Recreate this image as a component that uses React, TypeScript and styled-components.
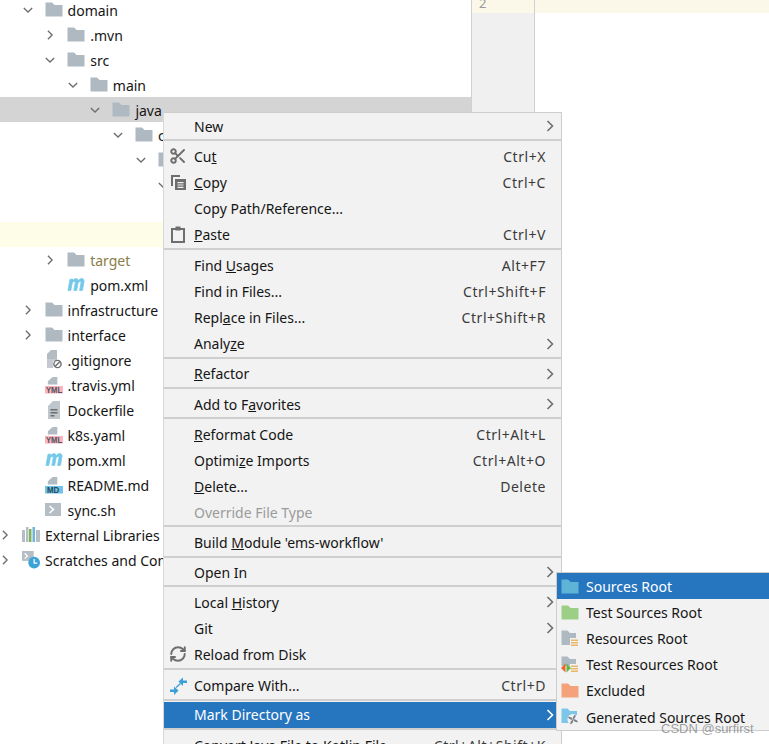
import React from "react";
import styled, { createGlobalStyle } from "styled-components";
import { Scissors, RefreshCw } from "lucide-react";

const GlobalStyle = createGlobalStyle`
  html, body {
    margin: 0;
    padding: 0;
    background: #fff;
  }
  body {
    font-family: "Noto Sans", "Open Sans", sans-serif;
  }
`;

const Page = styled.div`
  position: relative;
  width: 769px;
  height: 744px;
  overflow: hidden;
  display: flex;
  background: #fff;
  color: #151515;
  font-size: 14px;
`;

/* project tree */
const Tree = styled.div`
  width: 471px;
  flex: none;
  margin-top: -3px;
`;

const TreeRow = styled.div<{ $level: number; $tone?: "selected" | "caret" }>`
  display: flex;
  align-items: center;
  height: 25px;
  padding-left: ${(p) => p.$level * 22.6}px;
  background: ${(p) =>
    p.$tone === "selected" ? "#d4d4d4" : p.$tone === "caret" ? "#fefde8" : "transparent"};
`;

const ChevronSlot = styled.span`
  width: 10px;
  height: 14px;
  flex: none;
  display: flex;
  align-items: center;
  justify-content: center;
`;

const TreeIcon = styled.span`
  width: 18px;
  height: 18px;
  flex: none;
  margin-left: 12px;
  margin-right: 5px;
  display: flex;
  align-items: center;
  justify-content: center;
`;

const TreeLabel = styled.span<{ $muted?: boolean }>`
  white-space: nowrap;
  padding-top: 2px;
  color: ${(p) => (p.$muted ? "#8a7d48" : "#151515")};
`;

/* editor */
const Gutter = styled.div`
  width: 62px;
  flex: none;
  background: #f0f0f0;
  border-left: 1px solid #d0d0d0;
  border-right: 1px solid #d0d0d0;
`;

const GutterLine = styled.div`
  height: 13px;
  background: #fbf8ea;
  overflow: hidden;
  color: #9a9a9a;
  font-size: 13px;
  line-height: 6px;
  padding-left: 7px;
`;

const Editor = styled.div`
  flex: 1;
`;

const EditorLine = styled.div`
  height: 13px;
  background: #fbf8ea;
`;

/* context menus */
const Menu = styled.div`
  position: absolute;
  left: 163px;
  top: 112px;
  width: 397px;
  background: #f2f2f2;
  border: 1px solid #cdcdcd;
  border-left-color: #d8d8d8;
`;

const SubMenu = styled.div`
  position: absolute;
  left: 556px;
  top: 572px;
  width: 213px;
  box-sizing: border-box;
  background: #f2f2f2;
  border: 1px solid #cdcdcd;
  border-right: none;
`;

const Row = styled.div<{ $active?: boolean; $disabled?: boolean }>`
  display: flex;
  align-items: center;
  height: 26px;
  position: relative;
  padding-left: 30px;
  padding-right: 15px;
  white-space: nowrap;
  background: ${(p) => (p.$active ? "#2675bf" : "transparent")};
  color: ${(p) => (p.$active ? "#fff" : p.$disabled ? "#9b9b9b" : "#151515")};
`;

const SubRow = styled(Row)`
  height: 26.2px;
  padding-left: 29px;
`;

const RowIcon = styled.span`
  position: absolute;
  left: 5px;
  top: 4px;
  width: 18px;
  height: 18px;
  display: flex;
  align-items: center;
  justify-content: center;
`;

const SubRowIcon = styled(RowIcon)`
  left: 4px;
`;

const RowLabel = styled.span`
  flex: 1;
`;

const Shortcut = styled.span`
  color: #3a3a3a;
  letter-spacing: 0.55px;
`;

const Arrow = styled.span`
  position: absolute;
  right: 5px;
  top: 7px;
  display: flex;
`;

const Separator = styled.div<{ $shift: number }>`
  height: 2px;
  background: #cfcfcf;
  margin: ${(p) => (p.$shift > 0 ? 1 : 0)}px 0 ${(p) => (p.$shift < 0 ? 1.3 : 2.3)}px;
`;

const Watermark = styled.div`
  position: absolute;
  left: 661px;
  top: 721px;
  font-family: "Liberation Sans", sans-serif;
  font-size: 13px;
  color: rgba(110, 110, 110, 0.65);
  white-space: nowrap;
`;

const Chevron = ({ open, color = "#6e6e6e" }: { open?: boolean; color?: string }) => (
  <svg width="12" height="12" viewBox="0 0 12 12" fill="none" stroke={color} strokeWidth="1.6">
    <path d={open ? "M1 3.5l5 5 5-5" : "M3.5 1l5 5-5 5"} />
  </svg>
);

const FolderIcon = ({ color = "#afb9c1" }: { color?: string }) => (
  <svg width="18" height="15" viewBox="0 0 18 15">
    <path d="M0.5 0.5h6.5l2.6 2.5H17.5V14.5H0.5z" fill={color} />
  </svg>
);

const SmallFile = () => <path d="M8 0.500h5v8H3V5z" fill="#b4bcc3" />;

const YamlIcon = () => (
  <svg width="19" height="18" viewBox="0 0 19 18">
    <SmallFile />
    <rect x="0" y="10" width="19" height="8" fill="#f9b4c0" />
    <text x="1" y="17" fontSize="9" fontFamily="Liberation Sans" fontWeight="700" textLength="17" lengthAdjust="spacingAndGlyphs" fill="#50565b">
      YML
    </text>
  </svg>
);

const MdIcon = () => (
  <svg width="19" height="18" viewBox="0 0 19 18">
    <SmallFile />
    <rect x="0" y="10" width="19" height="8" fill="#6ec3e6" />
    <text x="2" y="17" fontSize="9" fontFamily="Liberation Sans" fontWeight="700" textLength="13" lengthAdjust="spacingAndGlyphs" fill="#2c4a5c">
      MD
    </text>
  </svg>
);

const MavenIcon = () => (
  <svg width="19" height="13" viewBox="0 2.500 19 11.500" preserveAspectRatio="none">
    <path
      d="M1 13.500L3.200 3.500h3l-.3 1.500C7 3.700 8.400 3 9.600 3c1.300 0 2 .7 2.200 2C13 3.700 14.300 3 15.600 3c1.800 0 2.700 1.100 2.300 3l-1.600 7.500h-3l1.400-6.600c.2-.9-.1-1.300-.8-1.300-.6 0-1.400.4-2.200 1.200l-1.500 6.700h-3l1.400-6.600c.2-.9-.1-1.300-.8-1.300-.6 0-1.400.4-2.200 1.200L4 13.500z"
      fill="#74c8ea"
      stroke="#74c8ea"
      strokeWidth="0.7"
    />
  </svg>
);

const IgnoreIcon = () => (
  <svg width="18" height="19" viewBox="0 0 18 19">
    <path d="M2 9V4l4-4h6v9z" fill="#b4bcc3" />
    <path d="M2 9h6v9H2z" fill="#c4cacf" />
    <path d="M8 9h4v2H8z" fill="#c4cacf" />
    <circle cx="12.500" cy="14" r="3.600" fill="#fff" stroke="#6e6e6e" strokeWidth="1.400" />
    <path d="M10 16.500l5-5" stroke="#6e6e6e" strokeWidth="1.400" />
  </svg>
);

const DockerIcon = () => (
  <svg width="16" height="18" viewBox="0 0 16 18">
    <path d="M2 18V5l5-5h7v18z" fill="#c0c7cc" />
    <path d="M4.500 8h7v1.400h-7zM4.500 11h7v1.400h-7zM4.500 14h4v1.400h-4z" fill="#6e6e6e" />
  </svg>
);

const ShellIcon = () => (
  <svg width="17" height="14" viewBox="0 0 17 14">
    <rect width="16" height="13" fill="#b6bec5" />
    <path d="M4.500 3l4 3.500-4 3.500" fill="none" stroke="#fff" strokeWidth="1.600" />
  </svg>
);

const LibrariesIcon = () => (
  <svg width="18" height="15" viewBox="0 0 18 15">
    <rect x="0" y="3" width="3" height="12" fill="#b6bec5" />
    <rect x="4" y="0" width="2.500" height="15" fill="#b6bec5" />
    <rect x="7" y="2" width="2.500" height="13" fill="#7fb35c" />
    <rect x="10.500" y="0" width="2.500" height="15" fill="#6fb6dc" />
    <rect x="14" y="3" width="4" height="12" fill="#b6bec5" />
  </svg>
);

const ScratchIcon = () => (
  <svg width="20" height="20" viewBox="0 0 20 20">
    <rect y="0" width="13" height="11" fill="#b6bec5" />
    <path d="M3 2.500l3 3-3 3" fill="none" stroke="#fff" strokeWidth="1.400" />
    <circle cx="13.500" cy="13" r="6.500" fill="#3aa3d8" />
    <path d="M13.500 9v4.500h3.500" fill="none" stroke="#fff" strokeWidth="1.400" />
  </svg>
);

const CopyIcon = () => (
  <svg width="17" height="17" viewBox="0 0 17 17">
    <path d="M1 1h9v2H3v9H1z" fill="#6e6e6e" />
    <path d="M5 5h11v11H5z" fill="#6e6e6e" />
    <path d="M7.500 8h6v1.200h-6zM7.500 10.400h6v1.200h-6zM7.500 12.800h6V14h-6z" fill="#f2f2f2" />
  </svg>
);

const PasteIcon = () => (
  <svg width="14" height="17" viewBox="0 0 14 17">
    <path d="M1 3h12v13H1z" fill="none" stroke="#6e6e6e" strokeWidth="2" />
    <path d="M4.500 0.500h5v4h-5z" fill="#6e6e6e" />
  </svg>
);

const CompareIcon = () => (
  <svg width="17" height="18" viewBox="0 0 17 18" fill="#3b9fd8">
    <path d="M8.500 4.500L13 0.500v3h4v2.500h-4v3z" />
    <path d="M8.500 13.500L4 9.500v3H0V15h4v3z" />
    <path d="M6 10.500L10.500 6.500" stroke="#3b9fd8" strokeWidth="1.400" />
  </svg>
);

const ResourceLines = () => <path d="M10 9.500h7v1.500h-7zM10 12h7v1.500h-7zM10 14.500h7V16h-7z" fill="#eab768" />;

const ResourcesIcon = () => (
  <svg width="18" height="16" viewBox="0 0 18 16">
    <path d="M0.500 0.500h6l2.500 2.500H15v5H9v7H0.500z" fill="#afb9c1" />
    <ResourceLines />
  </svg>
);

const TestResourcesIcon = () => (
  <svg width="18" height="17" viewBox="0 0 18 17">
    <path d="M0.500 0.500h6l2.500 2.500H15v5H9v2H0.500z" fill="#afb9c1" />
    <ResourceLines />
    <path d="M4.500 7.500v9L0 12z" fill="#e8662f" />
    <path d="M5.500 7.500v9L10 12z" fill="#62b543" />
  </svg>
);

const GeneratedIcon = () => (
  <svg width="18" height="17" viewBox="0 0 18 17">
    <path d="M0.500 0.500h6l2.500 2.500H16v4H8v8H0.500z" fill="#7cc6ea" />
    <circle cx="12" cy="11.500" r="5.500" fill="#f2f2f2" />
    <path
      d="M12 11.500c-.5-2 .2-4 2.500-5 .6 2-.4 4-2.500 5zm0 0c2-.5 4 .2 5 2.500-2 .6-4-.4-5-2.500zm0 0c.5 2-.2 4-2.500 5-.6-2 .4-4 2.500-5zm0 0c-2 .5-4-.2-5-2.500 2-.6 4 .4 5 2.500z"
      fill="#7a8288"
    />
  </svg>
);

type TreeItem = {
  level: number;
  label: string;
  icon?: React.ReactNode;
  open?: boolean;
  leaf?: boolean;
  tone?: "selected" | "caret";
  muted?: boolean;
};

const folder = <FolderIcon />;

const treeItems: TreeItem[] = [
  { level: 1, label: "domain", icon: folder, open: true },
  { level: 2, label: ".mvn", icon: folder },
  { level: 2, label: "src", icon: folder, open: true },
  { level: 3, label: "main", icon: folder, open: true },
  { level: 4, label: "java", icon: folder, open: true, tone: "selected" },
  { level: 5, label: "com", icon: folder, open: true },
  { level: 6, label: "", icon: folder, open: true },
  { level: 7, label: "", open: true },
  { level: 0, label: "", leaf: true },
  { level: 0, label: "", leaf: true, tone: "caret" },
  { level: 2, label: "target", icon: folder, muted: true },
  { level: 2, label: "pom.xml", icon: <MavenIcon />, leaf: true },
  { level: 1, label: "infrastructure", icon: folder },
  { level: 1, label: "interface", icon: folder },
  { level: 1, label: ".gitignore", icon: <IgnoreIcon />, leaf: true },
  { level: 1, label: ".travis.yml", icon: <YamlIcon />, leaf: true },
  { level: 1, label: "Dockerfile", icon: <DockerIcon />, leaf: true },
  { level: 1, label: "k8s.yaml", icon: <YamlIcon />, leaf: true },
  { level: 1, label: "pom.xml", icon: <MavenIcon />, leaf: true },
  { level: 1, label: "README.md", icon: <MdIcon />, leaf: true },
  { level: 1, label: "sync.sh", icon: <ShellIcon />, leaf: true },
  { level: 0, label: "External Libraries", icon: <LibrariesIcon /> },
  { level: 0, label: "Scratches and Consoles", icon: <ScratchIcon /> },
];

type MenuItem = {
  label: string; // "_" marks the mnemonic letter
  shortcut?: string;
  icon?: React.ReactNode;
  submenu?: boolean;
  active?: boolean;
  disabled?: boolean;
};

const menuGroups: MenuItem[][] = [
  [{ label: "New", submenu: true }],
  [
    { label: "Cu_t", shortcut: "Ctrl+X", icon: <Scissors size={20} color="#6e6e6e" strokeWidth={2.6} /> },
    { label: "_Copy", shortcut: "Ctrl+C", icon: <CopyIcon /> },
    { label: "Copy Path/Reference..." },
    { label: "_Paste", shortcut: "Ctrl+V", icon: <PasteIcon /> },
  ],
  [
    { label: "Find _Usages", shortcut: "Alt+F7" },
    { label: "Find in Files...", shortcut: "Ctrl+Shift+F" },
    { label: "Repl_ace in Files...", shortcut: "Ctrl+Shift+R" },
    { label: "Analy_ze", submenu: true },
  ],
  [{ label: "_Refactor", submenu: true }],
  [{ label: "Add to F_avorites", submenu: true }],
  [
    { label: "_Reformat Code", shortcut: "Ctrl+Alt+L" },
    { label: "Optimi_ze Imports", shortcut: "Ctrl+Alt+O" },
    { label: "_Delete...", shortcut: "Delete" },
    { label: "Override File Type", disabled: true },
  ],
  [{ label: "Build _Module 'ems-workflow'" }],
  [{ label: "Open In", submenu: true }],
  [
    { label: "Local _History", submenu: true },
    { label: "Git", submenu: true },
    { label: "Reload from Disk", icon: <RefreshCw size={18} color="#6e6e6e" strokeWidth={2.6} /> },
  ],
  [{ label: "Compare With...", shortcut: "Ctrl+D", icon: <CompareIcon /> }],
  [{ label: "Mark Directory as", submenu: true, active: true }],
  [{ label: "Convert Java File to Kotlin File", shortcut: "Ctrl+Alt+Shift+K" }],
];

// separators above these groups sit a pixel lower or higher
const separatorShift: Record<number, number> = { 2: 1, 7: -1, 9: 1, 10: -1 };

const subItems: MenuItem[] = [
  { label: "Sources Root", icon: <FolderIcon color="#5eb4d6" />, active: true },
  { label: "Test Sources Root", icon: <FolderIcon color="#9ccf85" /> },
  { label: "Resources Root", icon: <ResourcesIcon /> },
  { label: "Test Resources Root", icon: <TestResourcesIcon /> },
  { label: "Excluded", icon: <FolderIcon color="#f4a27a" /> },
  { label: "Generated Sources Root", icon: <GeneratedIcon /> },
];

const Mnemonic = ({ text }: { text: string }) => {
  const i = text.indexOf("_");
  if (i < 0) return <>{text}</>;
  return (
    <>
      {text.slice(0, i)}
      <u>{text[i + 1]}</u>
      {text.slice(i + 2)}
    </>
  );
};

const App = () => {
  return (
    <Page>
      <GlobalStyle />
      <Tree>
        {treeItems.map((item, index) => (
          <TreeRow key={index} $level={item.level} $tone={item.tone}>
            {!item.leaf && (
              <ChevronSlot>
                <Chevron open={item.open} />
              </ChevronSlot>
            )}
            {item.leaf && item.icon && <ChevronSlot />}
            {item.icon && <TreeIcon>{item.icon}</TreeIcon>}
            <TreeLabel $muted={item.muted}>{item.label}</TreeLabel>
          </TreeRow>
        ))}
      </Tree>
      <Gutter>
        <GutterLine>2</GutterLine>
      </Gutter>
      <Editor>
        <EditorLine />
      </Editor>

      <Menu>
        {menuGroups.map((group, groupIndex) => (
          <React.Fragment key={groupIndex}>
            {groupIndex > 0 && <Separator $shift={separatorShift[groupIndex] ?? 0} />}
            {group.map((item) => (
              <Row key={item.label} $active={item.active} $disabled={item.disabled}>
                {item.icon && <RowIcon>{item.icon}</RowIcon>}
                <RowLabel>
                  <Mnemonic text={item.label} />
                </RowLabel>
                {item.shortcut && <Shortcut>{item.shortcut}</Shortcut>}
                {item.submenu && (
                  <Arrow>
                    <Chevron color={item.active ? "#fff" : "#6e6e6e"} />
                  </Arrow>
                )}
              </Row>
            ))}
          </React.Fragment>
        ))}
      </Menu>

      <SubMenu>
        {subItems.map((item) => (
          <SubRow key={item.label} $active={item.active}>
            <SubRowIcon>{item.icon}</SubRowIcon>
            <RowLabel>{item.label}</RowLabel>
          </SubRow>
        ))}
      </SubMenu>

      <Watermark>CSDN @surfirst</Watermark>
    </Page>
  );
};

export default App;
